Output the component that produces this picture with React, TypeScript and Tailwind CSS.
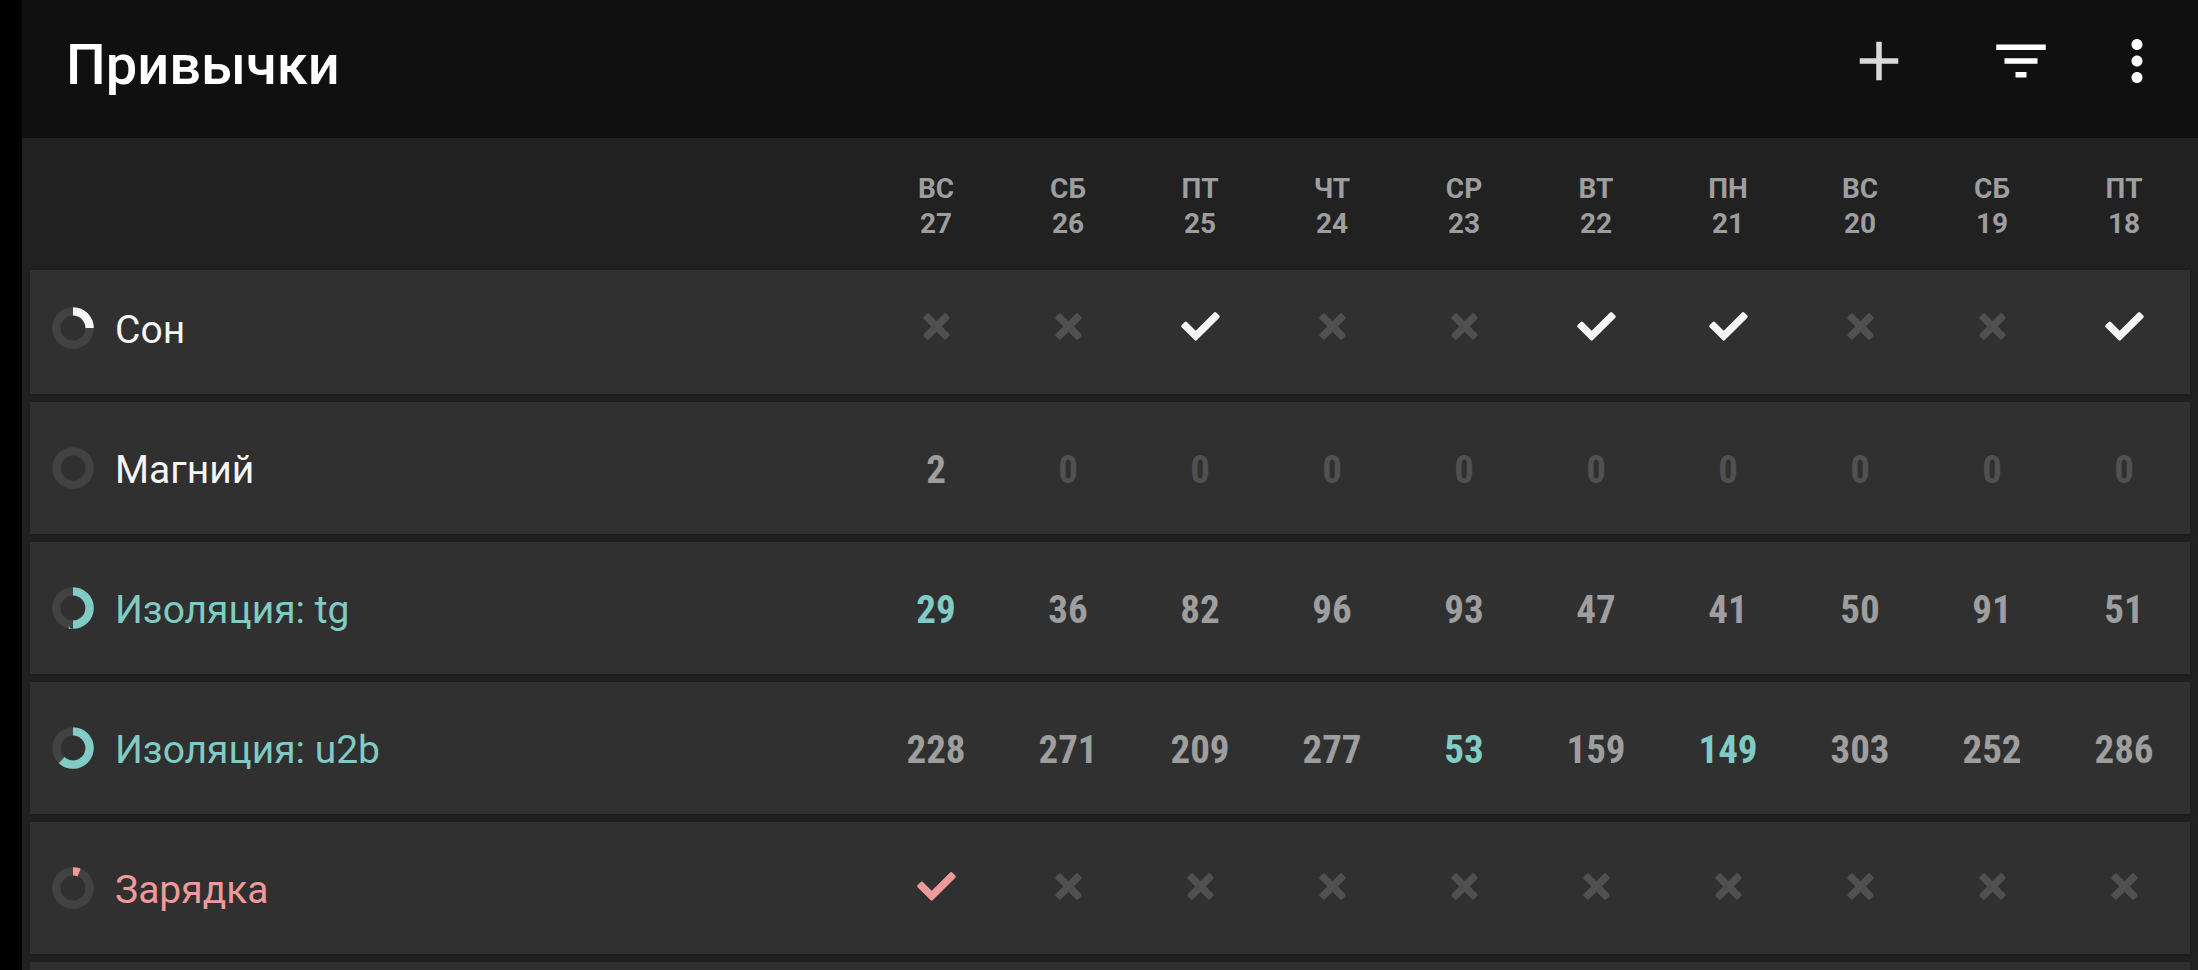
import React from "react";
import clsx from "clsx";
import { MdAdd, MdFilterList, MdMoreVert } from "react-icons/md";

interface Day {
  name: string;
  date: number;
}

interface Habit {
  name: string;
  score: number;
  text: string;
  // numeric habits: values at the goal are listed in `done`
  values?: number[];
  done?: number[];
  // yes/no habits
  checks?: boolean[];
}

const days: Day[] = [
  { name: "ВС", date: 27 },
  { name: "СБ", date: 26 },
  { name: "ПТ", date: 25 },
  { name: "ЧТ", date: 24 },
  { name: "СР", date: 23 },
  { name: "ВТ", date: 22 },
  { name: "ПН", date: 21 },
  { name: "ВС", date: 20 },
  { name: "СБ", date: 19 },
  { name: "ПТ", date: 18 },
];

const habits: Habit[] = [
  {
    name: "Сон",
    score: 0.25,
    text: "text-neutral-100",
    checks: [false, false, true, false, false, true, true, false, false, true],
  },
  {
    name: "Магний",
    score: 0,
    text: "text-neutral-100",
    values: [2, 0, 0, 0, 0, 0, 0, 0, 0, 0],
  },
  {
    name: "Изоляция: tg",
    score: 0.5,
    text: "text-[#80cbc4]",
    values: [29, 36, 82, 96, 93, 47, 41, 50, 91, 51],
    done: [29],
  },
  {
    name: "Изоляция: u2b",
    score: 0.62,
    text: "text-[#80cbc4]",
    values: [228, 271, 209, 277, 53, 159, 149, 303, 252, 286],
    done: [53, 149],
  },
  {
    name: "Зарядка",
    score: 0.06,
    text: "text-[#ef9a9a]",
    checks: [true, false, false, false, false, false, false, false, false, false],
  },
];

const Ring: React.FC<{ score: number }> = ({ score }) => (
  <svg viewBox="0 0 42 42" className="size-[42px] shrink-0 -rotate-90" fill="none" strokeWidth="8.4" aria-hidden="true">
    <circle cx="21" cy="21" r="16.6" stroke="#424242" />
    {score > 0 && (
      <circle
        cx="21"
        cy="21"
        r="16.6"
        stroke="currentColor"
        pathLength="100"
        strokeDasharray={`${score * 100} 100`}
      />
    )}
  </svg>
);

const Check = () => (
  <svg viewBox="0 0 117 88" className="h-[29px] w-[39px]" fill="currentColor" role="img" aria-label="Да">
    <path d="M2 39L10 31Q14 27 18 31L44 57L99 2Q103 -2 107 2L115 10Q119 14 115 18L47 86Q44 89 41 86L2 47Q-2 43 2 39Z" />
  </svg>
);

const Cross = () => (
  <svg viewBox="0 0 82 82" className="size-[27px] text-[#505050]" fill="currentColor" role="img" aria-label="Нет">
    <path d="M2 12L11 3Q15 -1 19 3L41 25L63 3Q67 -1 71 3L79 11Q83 15 79 19L57 41L79 63Q83 67 79 71L71 79Q67 83 63 79L41 57L19 79Q15 83 11 79L3 71Q-1 67 3 63L25 41L3 19Q-1 15 2 12Z" />
  </svg>
);

const HabitRow: React.FC<{ habit: Habit; first: boolean }> = ({ habit, first }) => {
  const { name, score, text, values, done, checks } = habit;
  const cell = first ? "h-[124px] pb-2" : "h-[132px]";

  return (
    <tr className="bg-[#303030] shadow-[0_1px_4px_rgba(0,0,0,0.25)]">
      <th scope="row" className={clsx(cell, "pl-[22px] text-left text-[39px] font-normal", text)}>
        <div className="flex items-center gap-[21px]">
          <Ring score={score} />
          <span className="pt-1">{name}</span>
        </div>
      </th>
      {checks?.map((checked, i) => (
        <td key={i} className={clsx(cell, text)}>
          <div className="flex justify-center pb-1">{checked ? <Check /> : <Cross />}</div>
        </td>
      ))}
      {values?.map((value, i) => (
        <td
          key={i}
          className={clsx(
            cell,
            "pt-1 text-center font-['Roboto_Condensed',Roboto,sans-serif] text-[39px] font-bold",
            done?.includes(value) ? text : value === 0 ? "text-[#505050]" : "text-[#9e9e9e]"
          )}
        >
          {value}
        </td>
      ))}
    </tr>
  );
};

export default function App() {
  return (
    <div className="h-screen overflow-hidden bg-black pl-[22px] font-[Roboto,sans-serif]">
      <div className="min-h-full bg-[#212121]">
        <header className="flex h-[138px] items-center justify-between bg-[#101010] pb-4 pl-11 pr-4 text-white">
          <h1 className="pt-2 text-[56px] font-medium">Привычки</h1>
          <div className="flex">
            <button type="button" aria-label="Добавить" className="flex w-[142px] justify-center text-[#d9d9d9]">
              <MdAdd className="size-[66px]" />
            </button>
            <button type="button" aria-label="Фильтр" className="flex w-[142px] justify-center">
              <MdFilterList className="size-[66px]" />
            </button>
            <button type="button" aria-label="Ещё" className="flex w-[90px] justify-center">
              <MdMoreVert className="size-[66px]" />
            </button>
          </div>
        </header>

        <main className="px-2">
          <table className="w-full table-fixed border-separate border-spacing-x-0 border-spacing-y-2">
            <thead>
              <tr className="h-[116px] text-[28px] leading-[35px] text-[#9e9e9e]">
                <td />
                {days.map(({ name, date }) => (
                  <th key={date} scope="col" className="w-[132px] pt-1 font-bold">
                    {name}
                    <br />
                    {date}
                  </th>
                ))}
              </tr>
            </thead>
            <tbody>
              {habits.map((habit, i) => (
                <HabitRow key={habit.name} habit={habit} first={i === 0} />
              ))}
              <tr className="h-[132px] bg-[#303030]">
                <td colSpan={11} />
              </tr>
            </tbody>
          </table>
        </main>
      </div>
    </div>
  );
}
